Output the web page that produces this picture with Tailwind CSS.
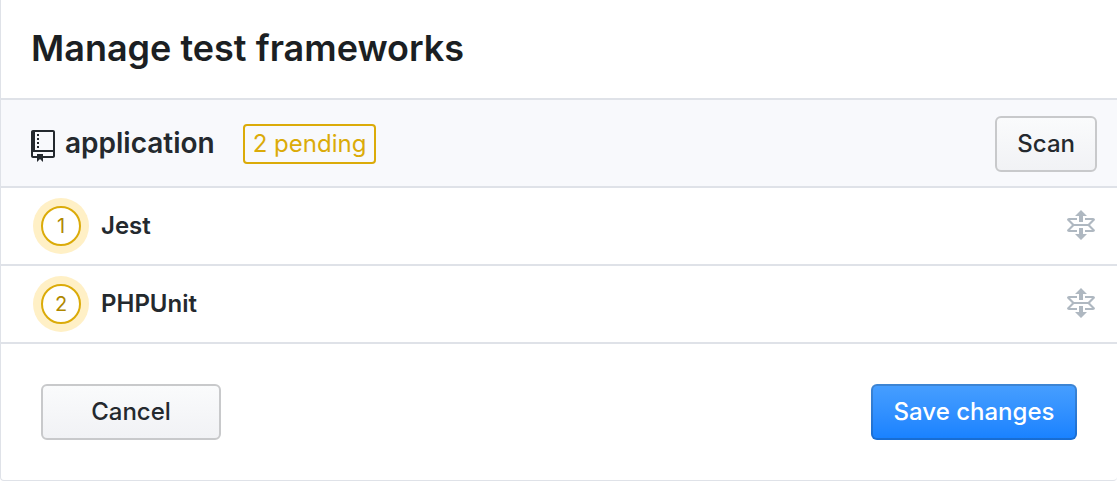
<!DOCTYPE html>
<html lang="en">
<head>
<meta charset="utf-8">
<title>Manage test frameworks</title>
<script src="https://cdn.jsdelivr.net/npm/@tailwindcss/browser@4"></script>
</head>
<body class="bg-white font-['Inter',sans-serif] text-2xl text-[#24292e]">
<main class="rounded-b-sm border-b border-l border-[#dfe2e8]">
  <header class="border-b-2 border-[#dfe2e8] px-[30px] pt-6 pb-[26px]">
    <h1 class="text-4xl leading-[48px] font-semibold text-[#1b1f23]">Manage test frameworks</h1>
  </header>
  <section class="flex items-center border-b-2 border-[#dfe2e8] bg-[#f8f9fc] pt-4 pr-5 pb-[14px] pl-[30px]">
    <svg class="mt-1 h-8 w-6 shrink-0" viewBox="0 0 12 16" fill="currentColor" aria-hidden="true"><path d="M4 9H3V8h1v1zm0-3H3v1h1V6zm0-2H3v1h1V4zm0-2H3v1h1V2zm8-1v12c0 .55-.45 1-1 1H6v2l-1.5-1.5L3 16v-2H1c-.55 0-1-.45-1-1V1c0-.55.45-1 1-1h10c.55 0 1 .45 1 1zm-1 10H1v2h2v-1h3v1h5v-2zm0-10H2v9h9V1z"/></svg>
    <h2 class="mb-[2px] ml-[10px] text-[28px] leading-9 font-semibold">application</h2>
    <span class="ml-7 rounded-sm border-2 border-[#dbab09] px-2 leading-9 text-[#dbab09]">2 pending</span>
    <button type="button" class="ml-auto h-14 rounded-md border-2 border-[#c8c9cb] bg-linear-to-b from-[#fafbfc] to-[#f1f2f5] px-5 font-medium">Scan</button>
  </section>
  <ol>
    <li class="flex h-[78px] items-center border-b-2 border-[#dfe2e8] pr-[22px] pl-8">
      <span class="flex size-14 items-center justify-center rounded-full bg-[#fff0c6]"><span class="flex size-10 items-center justify-center rounded-full border-2 border-[#dbab09] bg-white text-xl text-[#b08800]">1</span></span>
      <span class="ml-3 font-semibold">Jest</span>
      <button type="button" aria-label="Reorder Jest" class="ml-auto text-[#afb8c1]"><svg class="h-8 w-7" viewBox="0 0 14 16" fill="currentColor"><path d="M11.5 7.5L14 10c0 .55-.45 1-1 1H9v-1h3.5l-2-2h-7l-2 2H5v1H1c-.55 0-1-.45-1-1l2.5-2.5L0 5c0-.55.45-1 1-1h4v1H1.500l2 2h7l2-2H9V4h4c.55 0 1 .45 1 1l-2.5 2.500zM6 6h2V3h2L7 0 4 3h2v3zm2 3H6v3H4l3 3 3-3H8V9z"/></svg></button>
    </li>
    <li class="flex h-[78px] items-center border-b-2 border-[#dfe2e8] pr-[22px] pl-8">
      <span class="flex size-14 items-center justify-center rounded-full bg-[#fff0c6]"><span class="flex size-10 items-center justify-center rounded-full border-2 border-[#dbab09] bg-white text-xl text-[#b08800]">2</span></span>
      <span class="ml-3 font-semibold">PHPUnit</span>
      <button type="button" aria-label="Reorder PHPUnit" class="ml-auto text-[#afb8c1]"><svg class="h-8 w-7" viewBox="0 0 14 16" fill="currentColor"><path d="M11.5 7.5L14 10c0 .55-.45 1-1 1H9v-1h3.5l-2-2h-7l-2 2H5v1H1c-.55 0-1-.45-1-1l2.5-2.5L0 5c0-.55.45-1 1-1h4v1H1.500l2 2h7l2-2H9V4h4c.55 0 1 .45 1 1l-2.5 2.500zM6 6h2V3h2L7 0 4 3h2v3zm2 3H6v3H4l3 3 3-3H8V9z"/></svg></button>
    </li>
  </ol>
  <footer class="flex items-center justify-between p-10">
    <button type="button" class="h-14 min-w-[180px] rounded-md border-2 border-[#c8c9cb] bg-linear-to-b from-[#fafbfc] to-[#f1f2f5] px-5 font-medium">Cancel</button>
    <button type="button" class="h-14 min-w-[206px] rounded-md border-2 border-[#1b1f23]/20 bg-linear-to-b from-[#479fff] to-[#1781ff] bg-origin-border px-5 font-medium text-white">Save changes</button>
  </footer>
</main>
</body>
</html>
